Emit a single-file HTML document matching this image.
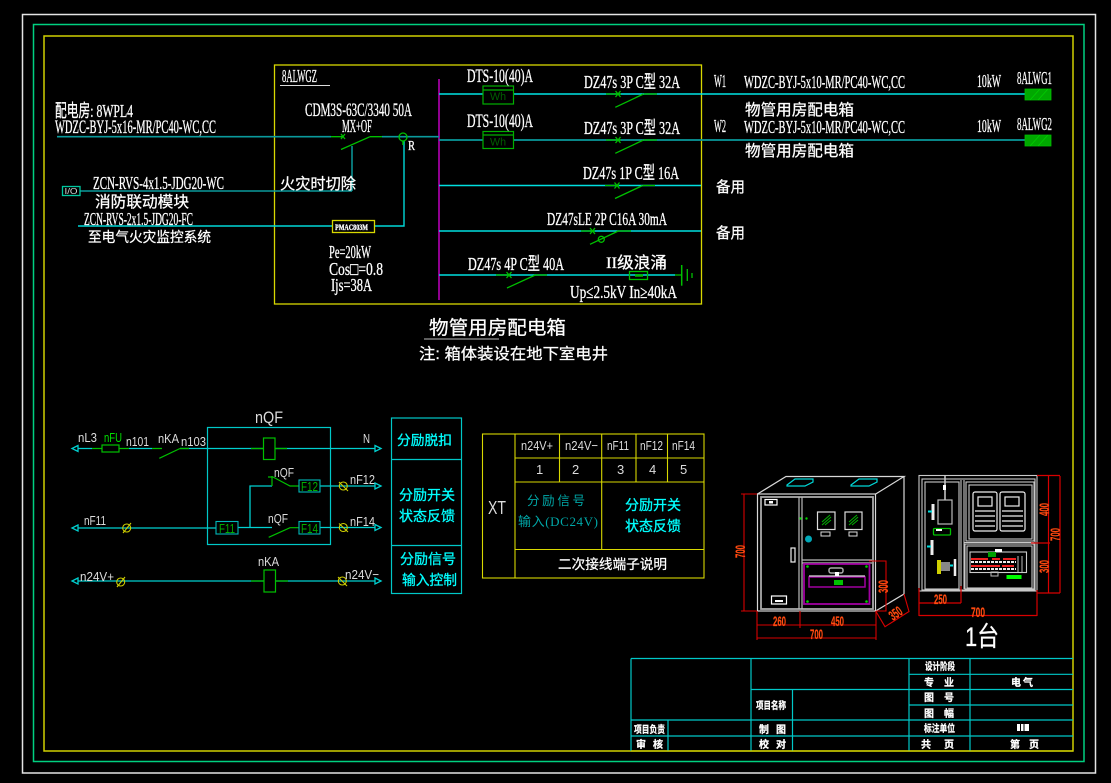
<!DOCTYPE html>
<html lang="zh"><head><meta charset="utf-8"><title>物管用房配电箱</title>
<style>
html,body{margin:0;padding:0;background:#000;width:1111px;height:783px;overflow:hidden}
svg{display:block;position:absolute;left:0;top:0}
text{font-family:"Liberation Serif","Noto Sans CJK SC",serif;fill:#fff;white-space:pre;stroke:#fff;stroke-width:.3}
.c{font-family:"Liberation Sans","Noto Sans CJK SC",sans-serif;stroke:#fff;stroke-width:.25}
.s{font-family:"Liberation Sans","Noto Sans CJK SC",sans-serif;fill:#dcdcdc;stroke:none}
.g{font-family:"Liberation Sans","Noto Sans CJK SC",sans-serif;fill:#00e000;stroke:none}
.cy{font-family:"Liberation Sans","Noto Sans CJK SC",sans-serif;fill:#00ffff;stroke:#00ffff;stroke-width:.3}
.r{font-family:"Liberation Sans",sans-serif;font-weight:bold;fill:#ff4a10;font-size:14px;stroke:#ff4a10;stroke-width:.2}
.t{font-family:"Liberation Sans","Noto Sans CJK SC",sans-serif;font-weight:bold;font-size:10px;stroke:#fff;stroke-width:.25}
.n{fill:none}
</style></head><body>
<svg width="1111" height="783" viewBox="0 0 1111 783" xmlns="http://www.w3.org/2000/svg" fill="none">
<rect width="1111" height="783" fill="#000"/>
<!-- frames -->
<rect x="22.5" y="14.5" width="1073" height="758.5" stroke="#e4e4e4" stroke-width="1.5"/>
<rect x="33.5" y="24.5" width="1050.5" height="737" stroke="#00d080" stroke-width="1.5"/>
<rect x="44" y="36" width="1029" height="715" stroke="#d0d000" stroke-width="1.5"/>

<!-- panel -->
<rect x="274.5" y="65" width="427" height="239" stroke="#d8d800" stroke-width="1.3"/>
<path d="M439 79V300" stroke="#a000a0" stroke-width="1.8"/>
<path d="M280 85.5H330" stroke="#ddd" stroke-width="1"/>
<!-- main lines -->
<path d="M57 136.7H331M382 136.7H439" stroke="#0a9a9c" stroke-width="1.7"/>
<path d="M439 140H1025" stroke="#0a9a9c" stroke-width="1.7"/>
<path d="M439 94H1025" stroke="#00e4e4" stroke-width="1.5"/>
<path d="M439 185.5H701M439 231H701M439 275H675" stroke="#00e0e0" stroke-width="1.4"/>
<path d="M352 146V191M80 191H352" stroke="#0a9a9c" stroke-width="1.5"/>
<path d="M404 141V226H78" stroke="#00d8d8" stroke-width="1.4"/>
<!-- main breaker -->
<path d="M331 136.7H344M370 136.7H382M341 149.5L370 136.7M341 134L345 139M345 134L341 139" stroke="#00c000" stroke-width="1.3"/>
<circle cx="403" cy="137" r="4" stroke="#00c000" stroke-width="1.3"/>
<path d="M403 141V145" stroke="#00c000" stroke-width="1.5"/>
<rect x="62.5" y="186.5" width="17.5" height="9" stroke="#00c8a0" stroke-width="1.3"/>
<rect x="332.5" y="220.5" width="42" height="12" stroke="#d8d800" stroke-width="1.3" fill="#000"/>
<!-- meters -->
<g stroke="#00b000" stroke-width="1.2" fill="#000">
<rect x="483" y="86" width="30.5" height="18"/><path d="M483 90H513.5"/>
<rect x="483" y="131.5" width="30.5" height="17"/><path d="M483 135H513.5"/>
</g>
<!-- branch breakers -->
<g stroke="#00c000" stroke-width="1.3">
<path d="M606 94H621M644 94H657M615.3 107.3L643.5 94M615.5 91L620.5 97M620.5 91L615.5 97"/>
<path d="M606 140H621M644 140H657M615.3 153.3L643.5 140M615.5 137L620.5 143M620.5 137L615.5 143"/>
<path d="M605 185.5H619M643 185.5H655M615 198.5L642.7 185.5M614.5 182.5L619.5 188.5M619.5 182.5L614.5 188.5"/>
<path d="M581 231H595M618.3 231H631M590 244.3L618.3 231M590 228L595 234M595 228L590 234"/>
<circle cx="601.3" cy="239.3" r="3"/>
<path d="M496 275H510M535.3 275H547M507 288L535.3 275M506.5 272L511.5 278M511.5 272L506.5 278"/>
<rect x="629.5" y="271.5" width="18" height="8"/>
<path d="M635 275.5H643" stroke-width="2.4"/><path d="M675 275H681.7"/>
<path d="M681.7 265V285.7" stroke-width="1.5"/><path d="M687.3 269V281M692 273V278"/>
</g>
<path d="M1025 89h26v11h-26zM1025 135h26v11h-26z" fill="#00a800" stroke="#00c000" stroke-width=".8"/>
<path d="M1030 100l10-11M1038 100l10-11M1030 146l10-11M1038 146l10-11" stroke="#00d000" stroke-width=".7"/>

<!-- panel texts -->
<text x="282" y="82" font-size="18" textLength="35" lengthAdjust="spacingAndGlyphs">8ALWGZ</text>
<text x="55" y="117" font-size="18" textLength="78" lengthAdjust="spacingAndGlyphs">配电房: 8WPL4</text>
<text x="55" y="133" font-size="19" textLength="161" lengthAdjust="spacingAndGlyphs">WDZC-BYJ-5x16-MR/PC40-WC,CC</text>
<text x="305" y="116" font-size="19" textLength="107" lengthAdjust="spacingAndGlyphs">CDM3S-63C/3340 50A</text>
<text x="342" y="132" font-size="18" textLength="30" lengthAdjust="spacingAndGlyphs">MX+OF</text>
<text x="408" y="150" font-size="14" textLength="7" lengthAdjust="spacingAndGlyphs">R</text>
<text x="64.5" y="194" font-size="8" textLength="13" lengthAdjust="spacingAndGlyphs" class="s">I/O</text>
<text x="93" y="189" font-size="18" textLength="131" lengthAdjust="spacingAndGlyphs">ZCN-RVS-4x1.5-JDG20-WC</text>
<text x="95" y="207" font-size="15.5" textLength="94" lengthAdjust="spacingAndGlyphs" class="c">消防联动模块</text>
<text x="84" y="225" font-size="18" textLength="109" lengthAdjust="spacingAndGlyphs">ZCN-RVS-2x1.5-JDG20-FC</text>
<text x="88" y="242" font-size="14" textLength="123" lengthAdjust="spacingAndGlyphs" class="c">至电气火灾监控系统</text>
<text x="280" y="189" font-size="15.5" textLength="76" lengthAdjust="spacingAndGlyphs" class="c">火灾时切除</text>
<text x="335" y="230" font-size="8" font-weight="bold" textLength="33" lengthAdjust="spacingAndGlyphs">PMAC803M</text>
<text x="329" y="258" font-size="18" textLength="42" lengthAdjust="spacingAndGlyphs">Pe=20kW</text>
<text x="329" y="275" font-size="18" textLength="54" lengthAdjust="spacingAndGlyphs">Cos□=0.8</text>
<text x="331" y="291" font-size="18" textLength="41" lengthAdjust="spacingAndGlyphs">Ijs=38A</text>

<text x="467" y="82" font-size="19" textLength="66" lengthAdjust="spacingAndGlyphs">DTS-10(40)A</text>
<text x="467" y="127" font-size="19" textLength="66" lengthAdjust="spacingAndGlyphs">DTS-10(40)A</text>
<text x="490" y="100" font-size="11" style="fill:#006000;stroke:none;font-family:'Liberation Sans'" textLength="16" lengthAdjust="spacingAndGlyphs">Wh</text>
<text x="490" y="145.500" font-size="11" style="fill:#006000;stroke:none;font-family:'Liberation Sans'" textLength="16" lengthAdjust="spacingAndGlyphs">Wh</text>
<text x="584" y="88" font-size="18" textLength="96" lengthAdjust="spacingAndGlyphs">DZ47s 3P C型 32A</text>
<text x="584" y="134" font-size="18" textLength="96" lengthAdjust="spacingAndGlyphs">DZ47s 3P C型 32A</text>
<text x="583" y="179" font-size="18" textLength="96" lengthAdjust="spacingAndGlyphs">DZ47s 1P C型 16A</text>
<text x="547" y="225" font-size="18" textLength="120" lengthAdjust="spacingAndGlyphs">DZ47sLE 2P C16A 30mA</text>
<text x="468" y="270" font-size="18" textLength="96" lengthAdjust="spacingAndGlyphs">DZ47s 4P C型 40A</text>
<text x="606" y="268" font-size="16" textLength="61" lengthAdjust="spacingAndGlyphs">II级浪涌</text>
<text x="570" y="298" font-size="18" textLength="107" lengthAdjust="spacingAndGlyphs">Up≤2.5kV In≥40kA</text>
<text x="714" y="87" font-size="18" textLength="12" lengthAdjust="spacingAndGlyphs">W1</text>
<text x="714" y="132" font-size="18" textLength="12" lengthAdjust="spacingAndGlyphs">W2</text>
<text x="744" y="88" font-size="18" textLength="161" lengthAdjust="spacingAndGlyphs">WDZC-BYJ-5x10-MR/PC40-WC,CC</text>
<text x="744" y="133" font-size="18" textLength="161" lengthAdjust="spacingAndGlyphs">WDZC-BYJ-5x10-MR/PC40-WC,CC</text>
<text x="745" y="115" font-size="15.500" textLength="109" lengthAdjust="spacingAndGlyphs" class="c">物管用房配电箱</text>
<text x="745" y="156" font-size="15.500" textLength="109" lengthAdjust="spacingAndGlyphs" class="c">物管用房配电箱</text>
<text x="716" y="192" font-size="15" textLength="29" lengthAdjust="spacingAndGlyphs" class="c">备用</text>
<text x="716" y="238" font-size="15" textLength="29" lengthAdjust="spacingAndGlyphs" class="c">备用</text>
<text x="977" y="87" font-size="18" textLength="24" lengthAdjust="spacingAndGlyphs">10kW</text>
<text x="977" y="132" font-size="18" textLength="24" lengthAdjust="spacingAndGlyphs">10kW</text>
<text x="1017" y="84" font-size="18" textLength="35" lengthAdjust="spacingAndGlyphs">8ALWG1</text>
<text x="1017" y="130" font-size="18" textLength="35" lengthAdjust="spacingAndGlyphs">8ALWG2</text>

<text x="429" y="334" font-size="19" textLength="137" lengthAdjust="spacingAndGlyphs" class="c">物管用房配电箱</text>
<path d="M424 339H499" stroke="#bbb" stroke-width="1"/>
<text x="419" y="359" font-size="15.500" textLength="189" lengthAdjust="spacingAndGlyphs" class="c">注: 箱体装设在地下室电井</text>

<!-- lower left schematic -->
<rect x="207.5" y="427.5" width="123" height="117" stroke="#00c8c8" stroke-width="1.2"/>
<g stroke="#00d0d0" stroke-width="1.3">
<path d="M78 448.500H92M129 448.500H152M180 448.500H263M275 448.500H375"/>
<path d="M78 528H216M238 527.500H272M320 527.500H375M250 527.500V486H272M320 486H375"/>
<path d="M78 581H264M275.500 581H375"/>
<path d="M78 445.500L72 448.500L78 451.500ZM375 445.500L381 448.500L375 451.500ZM78 525L72 528L78 531ZM375 483L381 486L375 489ZM375 524.500L381 527.500L375 530.500ZM78 578L72 581L78 584ZM375 578L381 581L375 584Z" fill="#000"/>
</g>
<g stroke="#00c000" stroke-width="1.2">
<path d="M92 448.500H129"/><rect x="102" y="445" width="17" height="7" fill="#000"/>
<path d="M152 448.500H162M180 448.500H189M159.300 458.300L180 448.500"/>
<rect x="263.500" y="438" width="11.500" height="21.500" fill="#000"/><path d="M251 448.500H263M275 448.500H287"/>
<rect x="264" y="570" width="11.500" height="22" fill="#000"/><path d="M251 581H264M275.500 581H288"/>
<path d="M272 486V476M268 477H273M273 477L290 486H299M268.700 537.300L290 527.700H299"/>
</g>
<g stroke="#00b8b8" stroke-width="1.1" fill="#000">
<rect x="299" y="480" width="21" height="12"/><rect x="299" y="521.500" width="21" height="12.500"/><rect x="216" y="521.500" width="22" height="12.500"/>
</g>
<text x="301" y="491" font-size="13" class="g" style="fill:#00b000" textLength="17" lengthAdjust="spacingAndGlyphs">F12</text>
<text x="301" y="533" font-size="13" class="g" style="fill:#00b000" textLength="17" lengthAdjust="spacingAndGlyphs">F14</text>
<text x="219" y="533" font-size="13" class="g" style="fill:#00b000" textLength="16" lengthAdjust="spacingAndGlyphs">F11</text>
<g stroke="#d0d000" stroke-width="1.1">
<circle cx="343.300" cy="486" r="4"/><path d="M339 482L348 491"/>
<circle cx="343.300" cy="527.500" r="4"/><path d="M339 523.500L348 532"/>
<circle cx="126.700" cy="528" r="4"/><path d="M123 533L131 523"/>
<circle cx="120.700" cy="582" r="4"/><path d="M117 587L125 577"/>
<circle cx="342.300" cy="581" r="4"/><path d="M338 577L347 586"/>
</g>
<g>
<text x="78" y="442" font-size="13" class="s" textLength="19" lengthAdjust="spacingAndGlyphs">nL3</text>
<text x="104" y="442" font-size="13" class="g" textLength="18" lengthAdjust="spacingAndGlyphs">nFU</text>
<text x="126" y="446" font-size="13" class="s" textLength="23" lengthAdjust="spacingAndGlyphs">n101</text>
<text x="158" y="443" font-size="13" class="s" textLength="21" lengthAdjust="spacingAndGlyphs">nKA</text>
<text x="181" y="446" font-size="13" class="s" textLength="25" lengthAdjust="spacingAndGlyphs">n103</text>
<text x="255" y="423" font-size="17" class="s" textLength="28" lengthAdjust="spacingAndGlyphs">nQF</text>
<text x="363" y="443" font-size="13" class="s" textLength="7" lengthAdjust="spacingAndGlyphs">N</text>
<text x="274" y="477" font-size="13" class="s" textLength="20" lengthAdjust="spacingAndGlyphs">nQF</text>
<text x="268" y="523" font-size="13" class="s" textLength="20" lengthAdjust="spacingAndGlyphs">nQF</text>
<text x="350" y="484" font-size="13" class="s" textLength="25" lengthAdjust="spacingAndGlyphs">nF12</text>
<text x="350" y="526" font-size="13" class="s" textLength="25" lengthAdjust="spacingAndGlyphs">nF14</text>
<text x="84" y="525" font-size="13" class="s" textLength="22" lengthAdjust="spacingAndGlyphs">nF11</text>
<text x="80" y="581" font-size="13" class="s" textLength="34" lengthAdjust="spacingAndGlyphs">n24V+</text>
<text x="258" y="566" font-size="13" class="s" textLength="21" lengthAdjust="spacingAndGlyphs">nKA</text>
<text x="345" y="579" font-size="13" class="s" textLength="34" lengthAdjust="spacingAndGlyphs">n24V−</text>
</g>
<rect x="391.500" y="418" width="70" height="175.500" stroke="#00c8c8" stroke-width="1.2"/>
<path d="M391.500 459.500H461.500M391.500 545.500H461.500" stroke="#00c8c8" stroke-width="1.200"/>
<text x="397" y="445" font-size="13.800" class="cy" textLength="55" lengthAdjust="spacingAndGlyphs">分励脱扣</text>
<text x="399" y="500" font-size="14" class="cy" textLength="56" lengthAdjust="spacingAndGlyphs">分励开关</text>
<text x="399" y="521" font-size="14" class="cy" textLength="56" lengthAdjust="spacingAndGlyphs">状态反馈</text>
<text x="400" y="564" font-size="14" class="cy" textLength="56" lengthAdjust="spacingAndGlyphs">分励信号</text>
<text x="402" y="585" font-size="14" class="cy" textLength="55" lengthAdjust="spacingAndGlyphs">输入控制</text>

<!-- XT table -->
<rect x="482.500" y="434" width="221.500" height="144" stroke="#d8d800" stroke-width="1.1"/>
<path d="M515 434V578M559.500 434V482M601.700 434V549.500M636 434V482M667.500 434V482M515 458H704M515 482H704M515 549.500H704" stroke="#d8d800" stroke-width="1.1"/>
<text x="521" y="450" font-size="13" class="s" textLength="32" lengthAdjust="spacingAndGlyphs">n24V+</text>
<text x="565" y="450" font-size="13" class="s" textLength="33" lengthAdjust="spacingAndGlyphs">n24V−</text>
<text x="607" y="450" font-size="13" class="s" textLength="22" lengthAdjust="spacingAndGlyphs">nF11</text>
<text x="640" y="450" font-size="13" class="s" textLength="23" lengthAdjust="spacingAndGlyphs">nF12</text>
<text x="672" y="450" font-size="13" class="s" textLength="23" lengthAdjust="spacingAndGlyphs">nF14</text>
<text x="536" y="474" font-size="13" class="s">1</text>
<text x="572" y="474" font-size="13" class="s">2</text>
<text x="617" y="474" font-size="13" class="s">3</text>
<text x="649" y="474" font-size="13" class="s">4</text>
<text x="680" y="474" font-size="13" class="s">5</text>
<text x="488" y="514" font-size="18" class="s" textLength="18" lengthAdjust="spacingAndGlyphs">XT</text>
<text x="527" y="505" font-size="12.500" class="s" style="fill:#00a8a8" textLength="58">分励信号</text>
<text x="518" y="526" font-size="13" class="s" style="fill:#00a8a8;font-family:'Liberation Serif','Noto Sans CJK SC',serif" textLength="80">输入(DC24V)</text>
<text x="625" y="510" font-size="14" class="cy" textLength="56" lengthAdjust="spacingAndGlyphs">分励开关</text>
<text x="625" y="531" font-size="14" class="cy" textLength="56" lengthAdjust="spacingAndGlyphs">状态反馈</text>
<text x="558" y="569" font-size="13.500" class="c" textLength="109" lengthAdjust="spacingAndGlyphs">二次接线端子说明</text>

<!-- cabinet front -->
<g stroke="#d8d8d8" stroke-width="1.200">
<path d="M757.500 494L786 476.500H904L875.700 494M904 476.500V594L875.700 611"/>
<rect x="757.500" y="494" width="118" height="117"/>
</g>
<rect x="761" y="497" width="112" height="112" stroke="#aaa" stroke-width="1.800"/>
<path d="M799 497V609M802 497V609M802 560H872M802 563H872" stroke="#bbb" stroke-width="1.200"/>
<path d="M787 485L795 479H813V482L805 486H787ZM851 485L859 479H877V482L869 486H851Z" stroke="#00d8d8" stroke-width="1.200"/>
<rect x="817.500" y="512" width="17.500" height="17.500" stroke="#ddd" stroke-width="1.200"/>
<rect x="845" y="512" width="17" height="17.500" stroke="#ddd" stroke-width="1.200"/>
<path d="M822 522L830 515M822 525L831 517M825 525L831 520M849 522L857 515M849 525L858 517M852 525L858 520" stroke="#00b000" stroke-width="1"/>
<path d="M821 532h9v4h-9zM849 532h8v4h-8z" stroke="#ddd" stroke-width="1"/>
<circle cx="808.500" cy="539" r="3.500" fill="#00a8b8"/>
<circle cx="800.500" cy="518.500" r="1.200" fill="#00d000"/><circle cx="806.500" cy="518.500" r="1.200" fill="#00d000"/>
<rect x="791" y="548" width="4" height="14" stroke="#eee" stroke-width="1.200"/>
<rect x="765" y="499.500" width="12" height="5.500" stroke="#fff" stroke-width="1.200"/><rect x="769" y="501" width="4" height="2.500" fill="#fff"/>
<rect x="771.500" y="596" width="15" height="8" stroke="#fff" stroke-width="1.200"/><rect x="775" y="600" width="8" height="2" fill="#fff"/>
<rect x="804" y="564" width="65.500" height="40" stroke="#a000a0" stroke-width="1.800"/>
<rect x="809" y="577" width="56" height="10" stroke="#a000a0" stroke-width="1.500"/>
<path d="M809 576H865" stroke="#ddd" stroke-width="1.200"/>
<rect x="829" y="568" width="14" height="5" rx="2" stroke="#aaa" stroke-width="1.500"/><rect x="835" y="572" width="4" height="4" fill="#fff"/>
<rect x="834" y="580" width="9" height="5" fill="#00c000"/>
<g fill="#00d000"><circle cx="807.500" cy="566.500" r="1.300"/><circle cx="866.500" cy="566.500" r="1.300"/><circle cx="807.500" cy="601.500" r="1.300"/><circle cx="866.500" cy="601.500" r="1.300"/></g>
<!-- dims front -->
<g stroke="#d80000" stroke-width="1.100">
<path d="M744 494V611M741 494H757M741 611H757"/>
<path d="M757 611V640M800 611V628M876 611V640M757 625H876M757 638H876"/>
<path d="M869 561H886V611H876M875.700 611L885 626.700L909 611.500L904 594"/>
</g>
<text x="773" y="626" class="r" textLength="13" lengthAdjust="spacingAndGlyphs">260</text>
<text x="831" y="626" class="r" textLength="13" lengthAdjust="spacingAndGlyphs">450</text>
<text x="810" y="639" class="r" textLength="13" lengthAdjust="spacingAndGlyphs">700</text>
<text class="r" transform="translate(745 558) rotate(-90)" textLength="13" lengthAdjust="spacingAndGlyphs">700</text>
<text class="r" transform="translate(888 593) rotate(-90)" textLength="13" lengthAdjust="spacingAndGlyphs">300</text>
<text class="r" transform="translate(893 621) rotate(-35)" textLength="13" lengthAdjust="spacingAndGlyphs">350</text>

<!-- cabinet inner -->
<g stroke="#c8c8c8" stroke-width="1.100">
<rect x="919" y="475.500" width="118" height="115.500"/>
<rect x="922" y="479" width="113" height="111"/>
<rect x="925" y="482" width="34" height="107"/>
<rect x="966" y="482" width="68" height="59"/>
<rect x="969" y="485" width="63" height="54"/>
<rect x="965" y="544" width="69" height="45"/>
<rect x="967" y="546" width="65" height="42"/>
<path d="M961 480V589M964 480V589M964 542.500H1034"/>
</g>
<g stroke="#eee" stroke-width="1.200">
<rect x="973" y="492" width="24" height="39" rx="2"/><rect x="1000" y="492" width="25" height="39" rx="2"/>
<rect x="978" y="497" width="14" height="9"/><rect x="1005" y="497" width="14" height="9"/>
<path d="M975 511H995M975 516H995M975 521H995M975 526H995M1002 511H1023M1002 516H1023M1002 521H1023M1002 526H1023"/>
</g>
<rect x="938" y="500" width="14" height="24" stroke="#bbb" stroke-width="1.200"/>
<path d="M945 475V500" stroke="#ccc" stroke-width="1.500"/><rect x="943" y="485" width="3" height="5" fill="#fff"/>
<path d="M933 504V520M932 540V555" stroke="#eee" stroke-width="3"/>
<path d="M928 511.500H932M927 546.500H931M950 565.500H953" stroke="#00e0e0" stroke-width="2"/>
<rect x="933.500" y="528.500" width="17" height="6.500" rx="1" stroke="#00c000" stroke-width="1.300"/><rect x="936" y="529" width="6" height="2" fill="#fff"/>
<rect x="937" y="560" width="4" height="14" fill="#d0d000"/><rect x="941" y="562" width="9" height="9" fill="#888"/>
<path d="M955 559V576" stroke="#eee" stroke-width="2.500"/>
<rect x="970" y="552" width="56.500" height="20.500" stroke="#ccc" stroke-width="1.100"/>
<path d="M971 559H988M992 559H1000M1003 559H1016M971 566H1000M1002 566H1014" stroke="#ee2020" stroke-width="2"/>
<path d="M971 562H1016M971 569H1016" stroke="#eee" stroke-width="2" stroke-dasharray="3 1"/>
<path d="M1018 556V572M1022 556V572" stroke="#bbb" stroke-width="1"/>
<rect x="988" y="552" width="8" height="5" fill="#00a000"/>
<rect x="1006.500" y="575" width="15" height="4" fill="#00ff00"/><rect x="995" y="549" width="7" height="3" fill="#fff"/>
<rect x="991" y="572" width="7" height="4" stroke="#bbb"/>
<g stroke="#d80000" stroke-width="1.200">
<path d="M1037 475.500H1060M1048.500 476V593M1060 476V593M1031 543H1050M1037 593H1060"/>
<path d="M919 588V616M961 586V603M1037 590V616M919 603H961M919 615.500H1037"/>
</g>
<text x="934" y="604" class="r" textLength="13" lengthAdjust="spacingAndGlyphs">250</text>
<text x="971" y="617" class="r" textLength="14" lengthAdjust="spacingAndGlyphs">700</text>
<text class="r" transform="translate(1049 516) rotate(-90)" textLength="13" lengthAdjust="spacingAndGlyphs">400</text>
<text class="r" transform="translate(1060 541) rotate(-90)" textLength="13" lengthAdjust="spacingAndGlyphs">700</text>
<text class="r" transform="translate(1049 573) rotate(-90)" textLength="13" lengthAdjust="spacingAndGlyphs">300</text>
<text x="965" y="646" font-size="27" textLength="34" lengthAdjust="spacingAndGlyphs" class="c">1台</text>

<!-- title block -->
<g stroke="#00c8c8" stroke-width="1.200">
<path d="M631 658.500H1073M631 658.500V751M751 658.500V751M792.500 689.500V751M909 658.500V751M970 658.500V751M668 720V751"/>
<path d="M909 674.300H1073M751 689.500H1073M909 705H1073M631 720H1073M631 736H1073"/>
</g>
<path d="M631 751H1073" stroke="#d0d000" stroke-width="1.200"/>
<text x="925" y="670" class="t" textLength="30" lengthAdjust="spacingAndGlyphs">设计阶段</text>
<text x="924" y="686" class="t" textLength="30">专 业</text>
<text x="1011" y="686" class="t" textLength="22">电 气</text>
<text x="924" y="701" class="t" textLength="30">图 号</text>
<text x="924" y="717" class="t" textLength="30">图 幅</text>
<text x="924" y="732" class="t" textLength="31" lengthAdjust="spacingAndGlyphs">标注单位</text>
<text x="921" y="748" class="t" textLength="33">共 页</text>
<text x="1010" y="748" class="t" textLength="29">第 页</text>
<text x="756" y="709" class="t" textLength="30" lengthAdjust="spacingAndGlyphs">项目名称</text>
<text x="634" y="733" class="t" textLength="31" lengthAdjust="spacingAndGlyphs">项目负责</text>
<text x="636" y="748" class="t" textLength="27">审 核</text>
<text x="759" y="733" class="t" textLength="27">制 图</text>
<text x="759" y="748" class="t" textLength="27">校 对</text>
<rect x="1017" y="724" width="12" height="7" fill="#fff"/><path d="M1020.500 724V731M1024 724V731" stroke="#000"/>
</svg>
</body></html>
